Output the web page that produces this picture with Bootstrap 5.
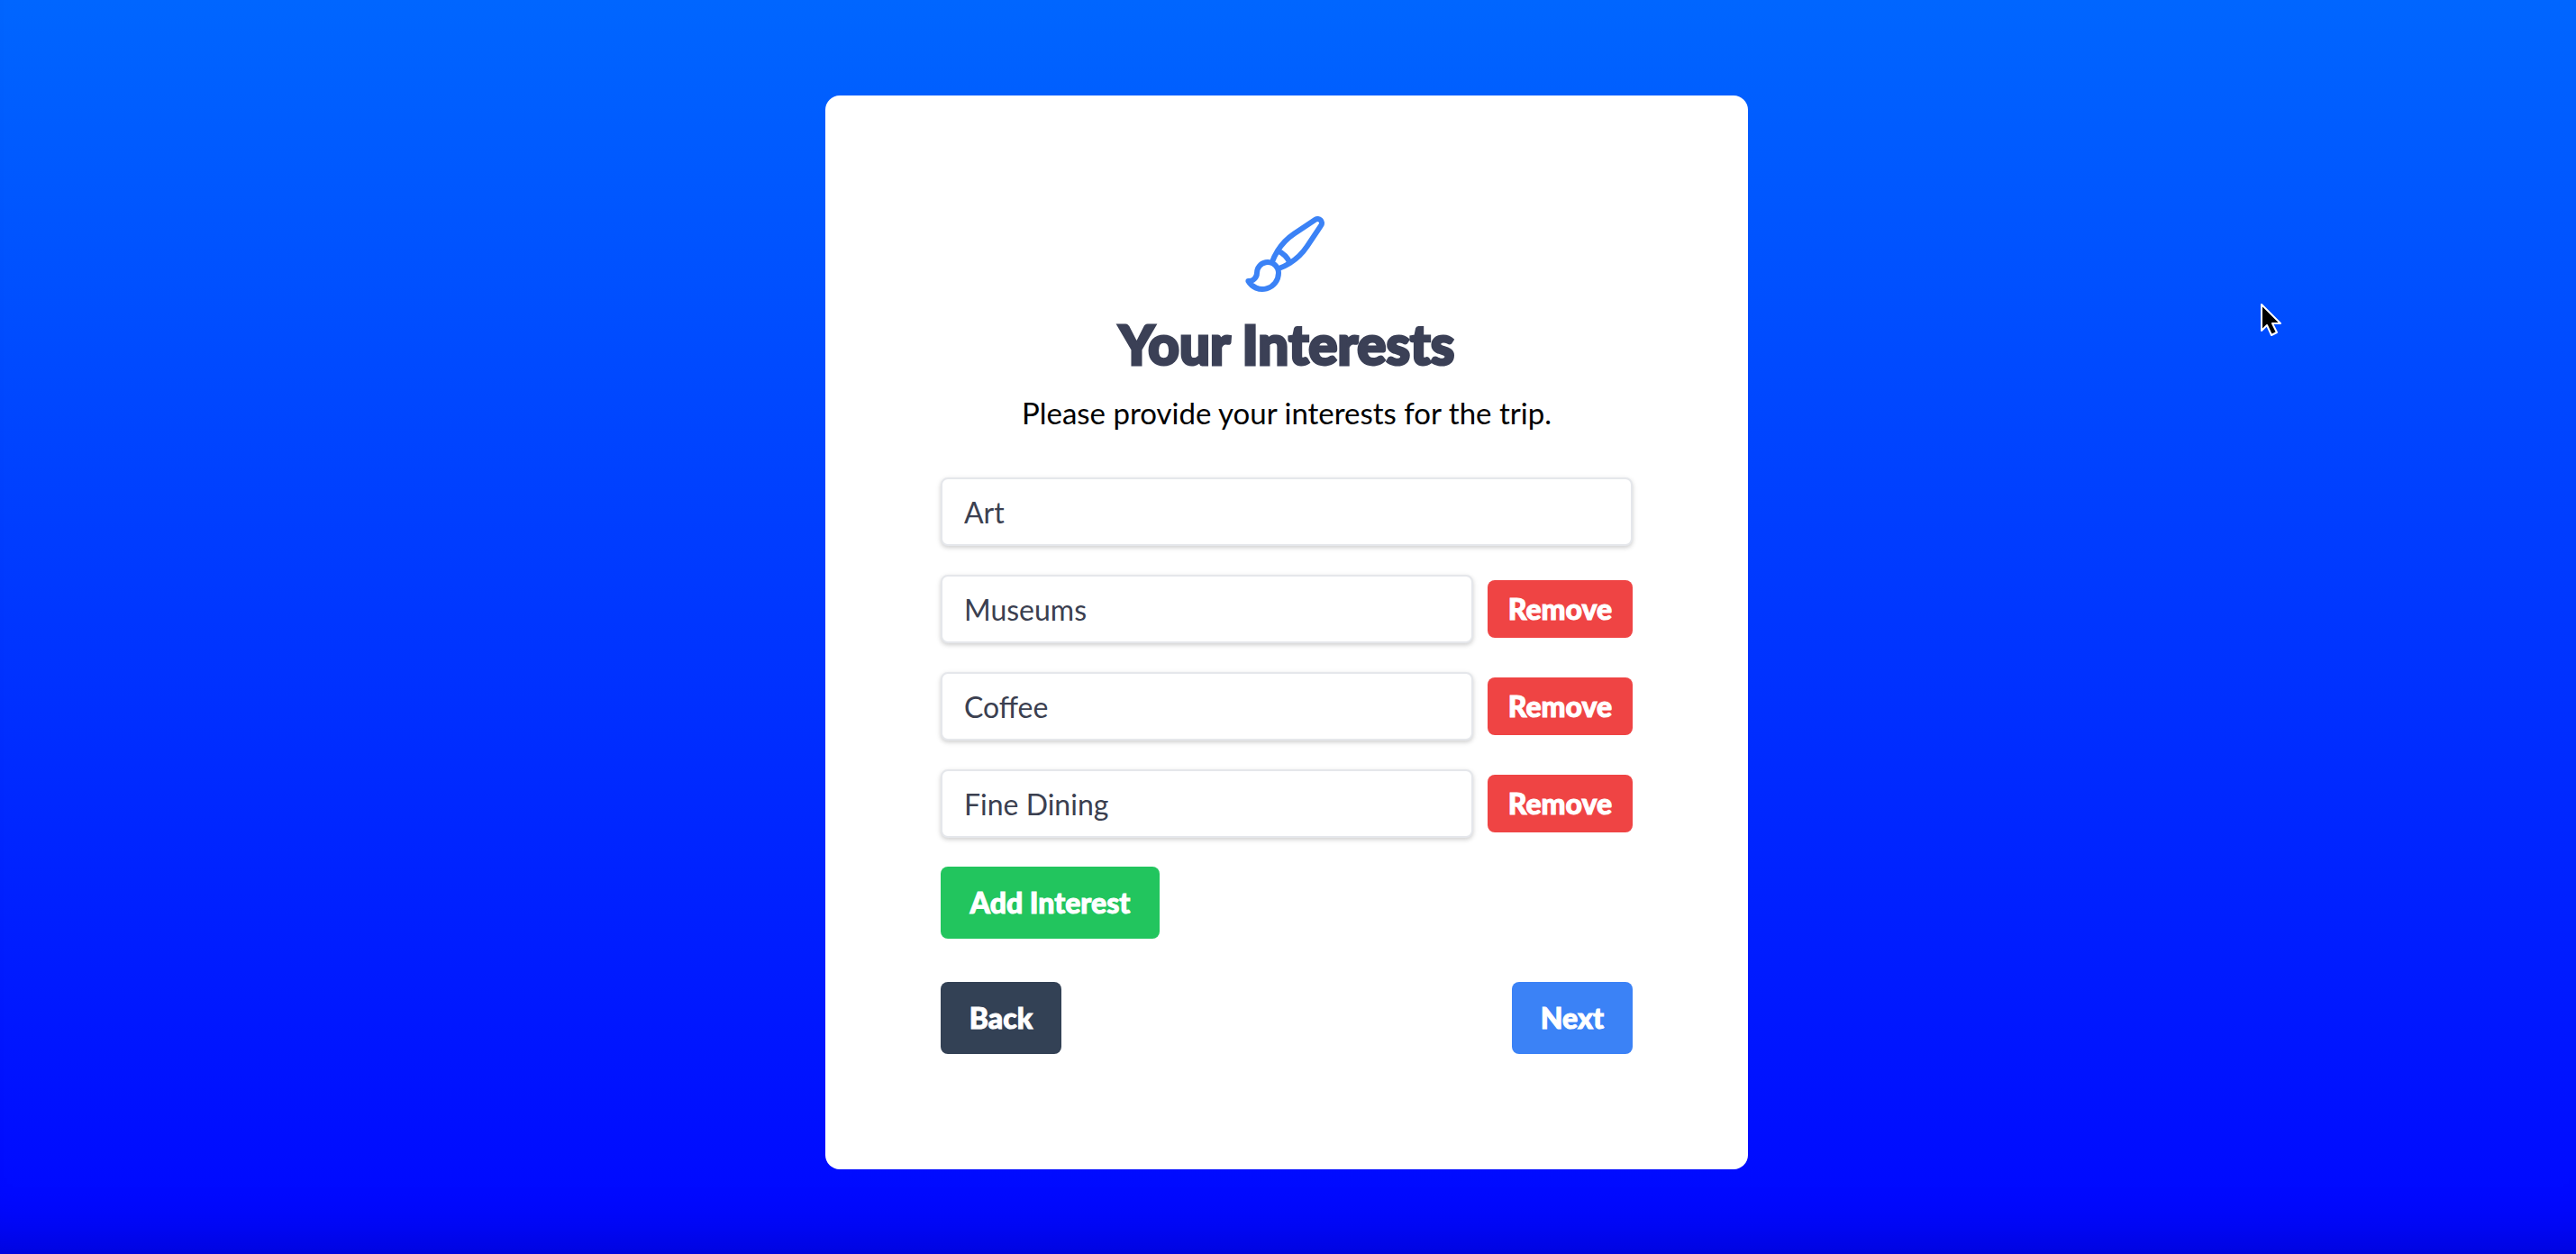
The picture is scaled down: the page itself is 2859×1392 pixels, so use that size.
<!DOCTYPE html>
<html lang="en">
<head>
<meta charset="utf-8">
<meta name="viewport" content="width=device-width, initial-scale=1">
<title>Your Interests</title>
<link href="https://cdn.jsdelivr.net/npm/bootstrap@5.3.0/dist/css/bootstrap.min.css" rel="stylesheet">
<style>
  body {
    font-family: Lato, "Open Sans", sans-serif;
    font-size: 33px;
    line-height: 48px;
    color: #000;
    background: linear-gradient(#06f, #0005ff) no-repeat;
    box-shadow: inset 0 -70px 70px -70px rgba(0, 0, 0, .25);
    padding: 24px 15px 12px 12px;
  }
  .trip-panel { width: 100%; max-width: 1024px; padding: 128px; border-radius: 16px; }
  .brush-icon { width: 96px; height: 96px; color: #3b82f6; }
  .trip-title { font-size: 60px; line-height: 72px; font-weight: 900; color: #3b4056; -webkit-text-stroke: 3px #3b4056; }
  .interest-box {
    height: 76px;
    padding: 12px 24px;
    font-size: 32px;
    line-height: 48px;
    color: #3b4050;
    border: 2px solid #e5e7eb;
    border-radius: 8px;
    box-shadow: 0 2px 6px rgba(0, 0, 0, .1), 0 2px 4px rgba(0, 0, 0, .1);
  }
  .interest-box:focus { color: #3b4050; }
  .trip-btn {
    height: 80px;
    min-width: 134px;
    padding: 0 20px;
    font-size: 32px;
    line-height: 48px;
    font-weight: 900;
    color: #fff;
    -webkit-text-stroke: 1px #fff;
    border: 0;
    border-radius: 8px;
  }
  .trip-btn:hover { color: #fff; opacity: .9; }
  .btn-remove { height: 64px; width: 161px; background: #ef4444; }
  .btn-add { width: 243px; background: #22c55e; }
  .btn-back { background: #334155; }
  .btn-next { background: #3b82f6; }
  .row-stack { gap: 32px; }
  .trip-pointer { position: fixed; left: 87.7%; top: 336px; width: 26px; height: 40px; pointer-events: none; }
</style>
</head>
<body class="min-vh-100 d-flex justify-content-center align-items-center">
<main class="trip-panel bg-white">
  <header class="text-center d-flex flex-column align-items-center gap-3 mb-5">
    <svg class="brush-icon" viewBox="0 0 24 24" fill="none" stroke="currentColor" stroke-width="1.5" stroke-linecap="round" stroke-linejoin="round" aria-hidden="true"><path d="M9.53 16.122a3 3 0 0 0-5.78 1.128 2.25 2.25 0 0 1-2.4 2.245 4.5 4.5 0 0 0 8.4-2.245c0-.399-.078-.78-.22-1.128Zm0 0a15.998 15.998 0 0 0 3.388-1.62m-5.043-.025a15.994 15.994 0 0 1 1.622-3.395m3.42 3.42a15.995 15.995 0 0 0 4.764-4.648l3.876-5.814a1.151 1.151 0 0 0-1.597-1.597L14.146 6.32a15.996 15.996 0 0 0-4.649 4.763m3.42 3.42a6.776 6.776 0 0 0-3.42-3.42"/></svg>
    <h1 class="trip-title mb-0">Your Interests</h1>
    <p class="mb-0">Please provide your interests for the trip.</p>
  </header>
  <form>
    <div class="row-stack d-flex flex-column align-items-start">
      <input class="form-control interest-box" type="text" value="Art" aria-label="Interest 1">
      <div class="d-flex align-items-center gap-3 w-100">
        <input class="form-control interest-box" type="text" value="Museums" aria-label="Interest 2">
        <button class="btn trip-btn btn-remove flex-shrink-0" type="button">Remove</button>
      </div>
      <div class="d-flex align-items-center gap-3 w-100">
        <input class="form-control interest-box" type="text" value="Coffee" aria-label="Interest 3">
        <button class="btn trip-btn btn-remove flex-shrink-0" type="button">Remove</button>
      </div>
      <div class="d-flex align-items-center gap-3 w-100">
        <input class="form-control interest-box" type="text" value="Fine Dining" aria-label="Interest 4">
        <button class="btn trip-btn btn-remove flex-shrink-0" type="button">Remove</button>
      </div>
      <button class="btn trip-btn btn-add" type="button">Add Interest</button>
    </div>
    <div class="d-flex justify-content-between mt-5">
      <button class="btn trip-btn btn-back" type="button">Back</button>
      <button class="btn trip-btn btn-next" type="submit">Next</button>
    </div>
  </form>
</main>
<svg class="trip-pointer" viewBox="0 0 26 40" aria-hidden="true"><path d="M3 2v29l6-6 5 11 6-3-5-10h9z" fill="#000" stroke="#fff" stroke-width="2" stroke-linejoin="round"/></svg>
<script src="https://cdn.jsdelivr.net/npm/bootstrap@5.3.0/dist/js/bootstrap.bundle.min.js"></script>
</body>
</html>
